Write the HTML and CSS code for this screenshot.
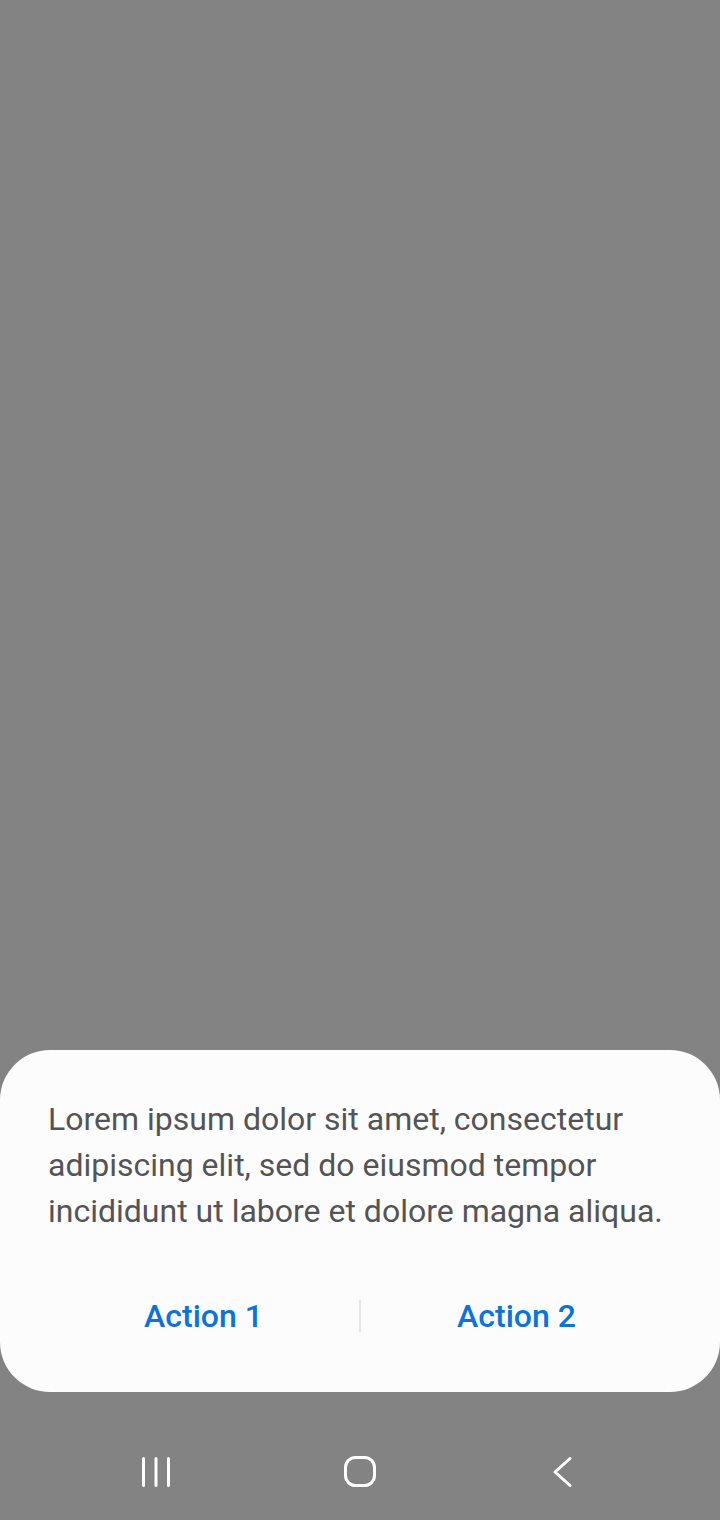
FILE: index.html
```html
<!DOCTYPE html>
<html>
<head>
<meta charset="utf-8">
<link rel="stylesheet" href="styles.css">
</head>
<body>
<div class="screen">
  <div class="spacer"></div>
  <div class="dialog">
    <p class="message">Lorem ipsum dolor sit amet, consectetur adipiscing elit, sed do eiusmod tempor incididunt ut labore et dolore magna aliqua.</p>
    <div class="actions">
      <button class="action">Action 1</button>
      <span class="divider"></span>
      <button class="action">Action 2</button>
    </div>
  </div>
  <nav class="navbar">
    <svg class="nav-icon recents" width="40" height="40" viewBox="0 0 40 40">
      <g stroke="#fff" stroke-width="3" stroke-linecap="round">
        <line x1="8.5" y1="7.5" x2="8.5" y2="34.5"/>
        <line x1="21" y1="7.5" x2="21" y2="34.5"/>
        <line x1="33.5" y1="7.5" x2="33.5" y2="34.5"/>
      </g>
    </svg>
    <svg class="nav-icon home" width="40" height="40" viewBox="0 0 40 40">
      <rect x="5.5" y="6.5" width="29" height="28" rx="10" fill="none" stroke="#fff" stroke-width="3"/>
    </svg>
    <svg class="nav-icon back" width="40" height="40" viewBox="0 0 40 40">
      <polyline points="30,7.5 15,21 30,34.5" fill="none" stroke="#fff" stroke-width="3" stroke-linecap="round" stroke-linejoin="round"/>
    </svg>
  </nav>
</div>
</body>
</html>
```
FILE: styles.css
```css
html, body {
  margin: 0;
  padding: 0;
  background: #838383;
}
.screen {
  width: 720px;
  height: 1520px;
  display: flex;
  flex-direction: column;
  font-family: Roboto, "Noto Sans", sans-serif;
}
.spacer {
  flex: 1;
}
.dialog {
  background: #fcfcfc;
  border-radius: 50px;
  padding: 46px 48px 0 48px;
  height: 342px;
  box-sizing: border-box;
}
.message {
  margin: 0;
  font-size: 32px;
  line-height: 46px;
  color: #545454;
}
.actions {
  display: flex;
  align-items: center;
  margin-top: 59px;
  height: 46px;
}
.action {
  flex: 1;
  background: none;
  border: none;
  padding: 0;
  font-family: Roboto, "Noto Sans", sans-serif;
  font-size: 32px;
  font-weight: 500;
  line-height: 46px;
  color: #0b72de;
}
.divider {
  width: 2px;
  height: 32px;
  background: #e6e6e6;
}
.navbar {
  height: 128px;
  display: flex;
  align-items: flex-start;
  padding-left: 135px;
  box-sizing: border-box;
}
.nav-icon {
  display: block;
  margin-top: 59px;
}
.home {
  margin-left: 165px;
}
.back {
  margin-left: 160px;
}
```
